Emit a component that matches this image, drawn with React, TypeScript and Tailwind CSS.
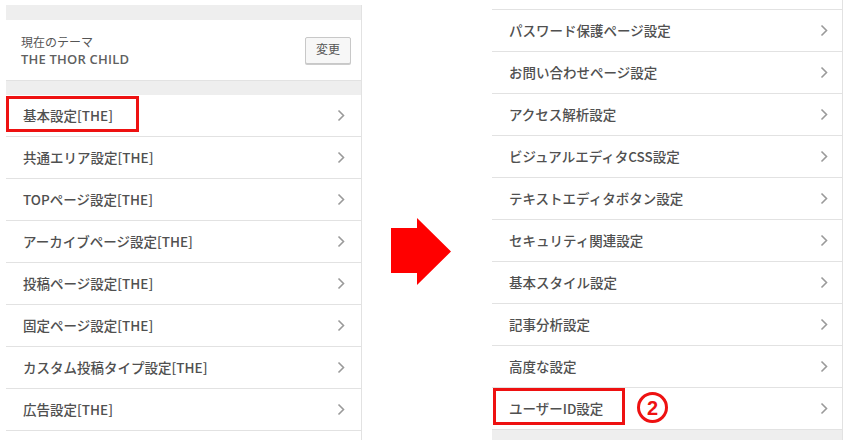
import React from "react";

const leftItems = [
  "基本設定[THE]",
  "共通エリア設定[THE]",
  "TOPページ設定[THE]",
  "アーカイブページ設定[THE]",
  "投稿ページ設定[THE]",
  "固定ページ設定[THE]",
  "カスタム投稿タイプ設定[THE]",
  "広告設定[THE]",
];

const rightItems = [
  "パスワード保護ページ設定",
  "お問い合わせページ設定",
  "アクセス解析設定",
  "ビジュアルエディタCSS設定",
  "テキストエディタボタン設定",
  "セキュリティ関連設定",
  "基本スタイル設定",
  "記事分析設定",
  "高度な設定",
  "ユーザーID設定",
];

const font = { fontFamily: '"Open Sans", "Noto Sans CJK JP", sans-serif' };
const rowFont = { fontFamily: '"Noto Sans CJK JP", sans-serif' };

function Chevron() {
  return (
    <svg width="8" height="13" viewBox="0 0 8 13" className="shrink-0">
      <polyline points="1.5,1.5 6.5,6.5 1.5,11.5" fill="none" stroke="#9a9a9a" strokeWidth="1.6" />
    </svg>
  );
}

function Row({ label, pr }: { label: string; pr: string }) {
  return (
    <div className={`h-[42px] flex items-center justify-between pl-[17px] ${pr} border-b border-[#e2e2e2] bg-white`}>
      <span className="text-[13.5px] font-medium text-[#505050]" style={rowFont}>{label}</span>
      <Chevron />
    </div>
  );
}

export default function App() {
  return (
    <div className="relative w-[852px] h-[440px] bg-white overflow-hidden flex" style={font}>
      {/* Left panel */}
      <div className="ml-[6px] mt-[5px] w-[356px] border-r border-[#e2e2e2] flex flex-col">
        <div className="h-[15px] bg-[#eeeeee]" />
        <div className="h-[61px] flex items-center justify-between pl-[15px] pr-[10px] border-b border-[#e2e2e2] bg-white">
          <div className="flex flex-col leading-[17px] pt-[2px]">
            <span className="text-[12px] text-[#555]">現在のテーマ</span>
            <span className="text-[13px] font-semibold text-[#606060] tracking-[0.2px]">THE THOR CHILD</span>
          </div>
          <div className="w-[46px] h-[27px] flex items-center justify-center border border-[#c8c8c8] rounded-[2px] bg-[#f7f7f7] shadow-[0_1px_0_#ccc] text-[12px] text-[#555]">
            変更
          </div>
        </div>
        <div className="h-[14px] bg-[#eeeeee]" />
        {leftItems.map((l) => (
          <Row key={l} label={l} pr="pr-[16px]" />
        ))}
      </div>

      {/* Middle arrow */}
      <div className="w-[130px] flex justify-start pl-[29px] pt-[218px]">
        <svg width="61" height="67" viewBox="0 0 61 67">
          <polygon points="0,10 26,10 26,0 60,33.5 26,67 26,55 0,55" fill="#ff0000" />
        </svg>
      </div>

      {/* Right panel */}
      <div className="w-[351px] border-r border-[#e2e2e2] flex flex-col">
        <div className="h-[10px] bg-white border-b border-[#e2e2e2]" />
        {rightItems.map((l) => (
          <Row key={l} label={l} pr="pr-[14px]" />
        ))}
        <div className="flex-1 bg-[#eeeeee]" />
      </div>

      {/* Highlight boxes */}
      <div className="absolute left-[6px] top-[96px] w-[133px] h-[36px] border-[3px] border-[#ee1111]" />
      <div className="absolute left-[493px] top-[388px] w-[132px] h-[37px] border-[3px] border-[#ee1111]" />
      <div className="absolute left-[637px] top-[392px] w-[31px] h-[31px] rounded-full border-[3px] border-[#ee1111] flex items-center justify-center">
        <span className="text-[20px] font-bold text-[#ee1111] leading-none" style={{ fontFamily: '"Liberation Sans", sans-serif' }}>2</span>
      </div>
    </div>
  );
}
